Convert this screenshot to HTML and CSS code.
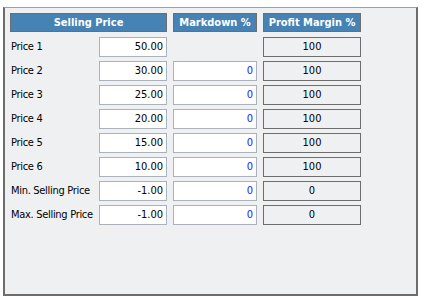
FILE: index.html
```html
<!DOCTYPE html>
<html lang="en">
<head>
    <meta charset="UTF-8">
    <title>Price Settings</title>
    <link rel="stylesheet" href="styles.css">
</head>
<body>

<div class="panel">
    <div class="grid">
        <div class="head wide">Selling Price</div>
        <div class="head">Markdown %</div>
        <div class="head">Profit Margin %</div>

        <div class="label">Price 1</div>
        <div class="field">50.00</div>
        <div></div>
        <div class="margin">100</div>

        <div class="label">Price 2</div>
        <div class="field">30.00</div>
        <div class="field blue">0</div>
        <div class="margin">100</div>

        <div class="label">Price 3</div>
        <div class="field">25.00</div>
        <div class="field blue">0</div>
        <div class="margin">100</div>

        <div class="label">Price 4</div>
        <div class="field">20.00</div>
        <div class="field blue">0</div>
        <div class="margin">100</div>

        <div class="label">Price 5</div>
        <div class="field">15.00</div>
        <div class="field blue">0</div>
        <div class="margin">100</div>

        <div class="label">Price 6</div>
        <div class="field">10.00</div>
        <div class="field blue">0</div>
        <div class="margin">100</div>

        <div class="label">Min. Selling Price</div>
        <div class="field">-1.00</div>
        <div class="field blue">0</div>
        <div class="margin">0</div>

        <div class="label">Max. Selling Price</div>
        <div class="field">-1.00</div>
        <div class="field blue">0</div>
        <div class="margin">0</div>
    </div>
</div>

</body>
</html>
```
FILE: styles.css
```css
body {
    margin: 0;
    background: #ffffff;
    font-family: "DejaVu Sans Condensed", "DejaVu Sans", sans-serif;
    font-size: 11px;
    color: #000000;
}
.panel {
    box-sizing: border-box;
    margin: 7px 0 0 3px;
    width: 415px;
    height: 289px;
    background: #eff0f2;
    border-top: 1px solid #a0a0a0;
    border-left: 2px solid #6d6d6d;
    border-right: 2px solid #6d6d6d;
    border-bottom: 2px solid #6d6d6d;
    padding: 5px 0 0 5px;
}
.grid {
    display: grid;
    grid-template-columns: 83px 68px 84px 98px;
    grid-auto-rows: 20px;
    column-gap: 6px;
    row-gap: 4px;
}
.head {
    box-sizing: border-box;
    height: 19px;
    margin-bottom: -1px;
    background: #4682b4;
    border: 1px solid #6d6d6d;
    color: #ffffff;
    font-weight: bold;
    text-align: center;
    line-height: 17px;
}
.wide {
    grid-column: span 2;
}
.label {
    line-height: 20px;
    white-space: nowrap;
    padding-left: 1px;
    letter-spacing: -0.3px;
}
.field {
    box-sizing: border-box;
    background: #ffffff;
    border: 1px solid #a9b1ba;
    text-align: right;
    padding-right: 3px;
    line-height: 18px;
}
.field.blue {
    color: #1a1aff;
}
.margin {
    box-sizing: border-box;
    border: 1px solid #6d6d6d;
    text-align: center;
    line-height: 18px;
}
```
